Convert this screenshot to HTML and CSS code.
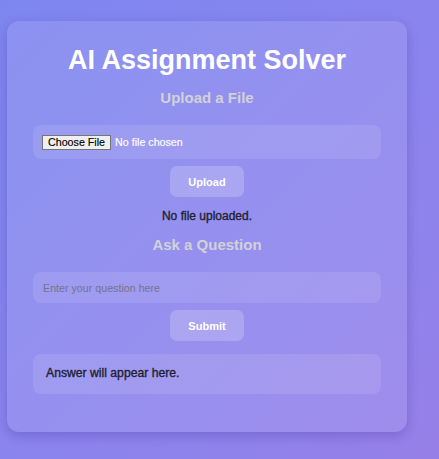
FILE: index.html
```html
<!DOCTYPE html>
<html lang="en">
<head>
<meta charset="utf-8">
<title>AI Assignment Solver</title>
<link rel="stylesheet" href="styles.css">
</head>
<body>
<div class="card">
  <h1 class="title">AI Assignment Solver</h1>
  <h3 class="section first">Upload a File</h3>
  <input class="file-input" type="file">
  <button class="btn" type="button">Upload</button>
  <p class="status">No file uploaded.</p>
  <h3 class="section">Ask a Question</h3>
  <input class="question" type="text" placeholder="Enter your question here">
  <button class="btn" type="button">Submit</button>
  <div class="answer">Answer will appear here.</div>
</div>
</body>
</html>
```

FILE: styles.css
```css
html {
  height: 100%;
}
body {
  margin: 0;
  min-height: 100%;
  padding: 21px 7px;
  box-sizing: border-box;
  background: linear-gradient(135deg, #7d86f0 0%, #8b84ee 55%, #9680e8 100%);
  font-family: "Liberation Sans", Arial, sans-serif;
}
.card {
  width: 400px;
  box-sizing: border-box;
  padding: 24px 26px 38px;
  border-radius: 12px;
  background: rgba(255, 255, 255, 0.1);
  box-shadow: 0 4px 12px rgba(40, 20, 120, 0.22);
  display: flex;
  flex-direction: column;
}
.title {
  margin: 0;
  font-size: 27px;
  line-height: 31px;
  font-weight: bold;
  color: #ffffff;
  text-align: center;
}
.section {
  margin: 12.5px 0 0;
  font-size: 15px;
  line-height: 17px;
  font-weight: bold;
  color: #d2d2d6;
  text-align: center;
}
.file-input {
  margin: 19.5px 0 0;
  display: block;
  width: 100%;
  height: 34px;
  box-sizing: border-box;
  padding: 10px 9px 0;
  border: none;
  border-radius: 8px;
  background: rgba(255, 255, 255, 0.1);
  font-family: "Liberation Sans", Arial, sans-serif;
  font-size: 10.7px;
  line-height: 15px;
  color: #ffffff;
  -webkit-text-stroke: 0.15px #ffffff;
}
.file-input::file-selector-button {
  height: 15px;
  margin: 0 4px 0 0;
  padding: 0 5px;
  border: 1px solid #767676;
  border-radius: 0;
  background: #efefef;
  color: #000000;
  font-family: "Liberation Sans", Arial, sans-serif;
  font-size: 10.7px;
  line-height: 13px;
  -webkit-text-stroke: 0.15px #000000;
}
.btn {
  align-self: center;
  margin-top: 7px;
  height: 31px;
  padding: 0 18px;
  border: none;
  border-radius: 7px;
  background: rgba(255, 255, 255, 0.2);
  color: #ffffff;
  font-family: "Liberation Sans", Arial, sans-serif;
  font-size: 11px;
  font-weight: bold;
}
.status {
  margin: 12px 0 0;
  font-size: 12px;
  line-height: 14px;
  color: #221f30;
  text-align: center;
  -webkit-text-stroke: 0.35px #221f30;
}
.question {
  margin: 19.5px 0 0;
  display: block;
  width: 100%;
  height: 31px;
  box-sizing: border-box;
  padding: 0 10px;
  border: none;
  border-radius: 8px;
  background: rgba(255, 255, 255, 0.1);
  font-family: "Liberation Sans", Arial, sans-serif;
  font-size: 10.7px;
  color: #333333;
  outline: none;
}
.question::placeholder {
  color: #75738a;
}
.answer {
  margin-top: 13px;
  padding: 12px 13px 14px;
  border-radius: 8px;
  background: rgba(255, 255, 255, 0.1);
  font-size: 12.2px;
  line-height: 14px;
  color: #221f30;
  -webkit-text-stroke: 0.35px #221f30;
}
```
